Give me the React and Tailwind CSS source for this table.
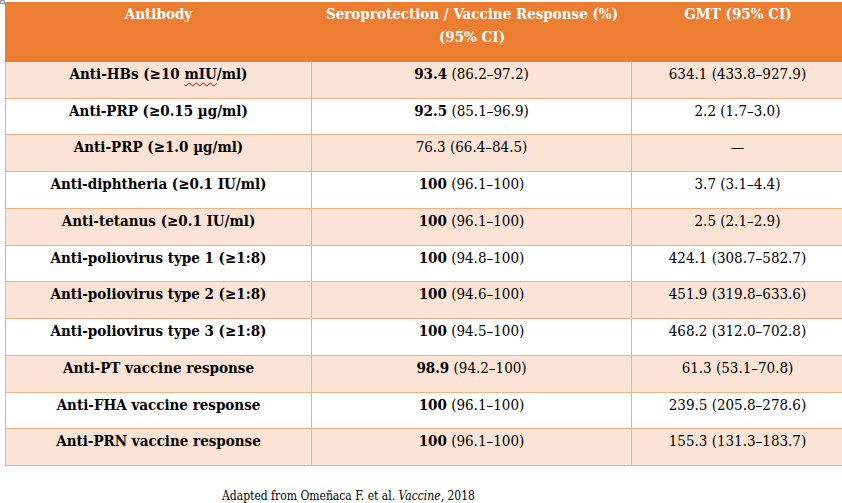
import React from 'react';

const rows = [
  { name: 'Anti-HBs (≥10 ', squiggle: 'mIU', tail: '/ml)', num: '93.4', bold: true, ci: '(86.2–97.2)', gmt: '634.1 (433.8–927.9)', h: 'h-[37px]' },
  { name: 'Anti-PRP (≥0.15 µg/ml)', num: '92.5', bold: true, ci: '(85.1–96.9)', gmt: '2.2 (1.7–3.0)', h: 'h-[36px]' },
  { name: 'Anti-PRP (≥1.0 µg/ml)', num: '76.3', bold: false, ci: '(66.4–84.5)', gmt: '—', h: 'h-[37px]' },
  { name: 'Anti-diphtheria (≥0.1 IU/ml)', num: '100', bold: true, ci: '(96.1–100)', gmt: '3.7 (3.1–4.4)', h: 'h-[37px]' },
  { name: 'Anti-tetanus (≥0.1 IU/ml)', num: '100', bold: true, ci: '(96.1–100)', gmt: '2.5 (2.1–2.9)', h: 'h-[37px]' },
  { name: 'Anti-poliovirus type 1 (≥1:8)', num: '100', bold: true, ci: '(94.8–100)', gmt: '424.1 (308.7–582.7)', h: 'h-[36px]' },
  { name: 'Anti-poliovirus type 2 (≥1:8)', num: '100', bold: true, ci: '(94.6–100)', gmt: '451.9 (319.8–633.6)', h: 'h-[37px]' },
  { name: 'Anti-poliovirus type 3 (≥1:8)', num: '100', bold: true, ci: '(94.5–100)', gmt: '468.2 (312.0–702.8)', h: 'h-[37px]' },
  { name: 'Anti-PT vaccine response', num: '98.9', bold: true, ci: '(94.2–100)', gmt: '61.3 (53.1–70.8)', h: 'h-[37px]' },
  { name: 'Anti-FHA vaccine response', num: '100', bold: true, ci: '(96.1–100)', gmt: '239.5 (205.8–278.6)', h: 'h-[36px]' },
  { name: 'Anti-PRN vaccine response', num: '100', bold: true, ci: '(96.1–100)', gmt: '155.3 (131.3–183.7)', h: 'h-[37px]' },
];

const squiggle = 'underline decoration-wavy decoration-[#e00000] decoration-1 underline-offset-[3px]';

export default function App() {
  return (
    <div className="relative w-[842px] h-[503px] overflow-hidden bg-white text-black font-['DejaVu_Serif_Condensed','DejaVu_Serif',serif]">
      {/* table move handle */}
      <div className="absolute left-0 top-0 w-[5px] h-[4px] bg-[#d6d6d6] border border-[#a0a0a0]"></div>

      <div className="pt-[2px] pl-[5px]">
        <div className="w-[839px] grid grid-cols-[307px_320px_212px] text-[15px] leading-[23px]">
          {/* header */}
          <div className="h-[60px] bg-[#ED7D31] text-white font-bold text-center pt-[1px]">Antibody</div>
          <div className="h-[60px] bg-[#ED7D31] text-white font-bold text-center pt-[1px]">
            Seroprotection / Vaccine Response (%)
            <br />
            (95% CI)
          </div>
          <div className="h-[60px] bg-[#ED7D31] text-white font-bold text-center pt-[1px]">GMT (95% CI)</div>

          {rows.map((r, i) => {
            const bg = i % 2 === 0 ? 'bg-[#FBE4D5]' : 'bg-white';
            return (
              <React.Fragment key={i}>
                <div className={`${r.h} ${bg} border-l border-r border-b border-[#F4B083] text-center font-bold pt-[1px]`}>
                  {r.squiggle ? (
                    <>
                      {r.name}
                      <span className={squiggle}>{r.squiggle}</span>
                      {r.tail}
                    </>
                  ) : (
                    r.name
                  )}
                </div>
                <div className={`${r.h} ${bg} border-r border-b border-[#F4B083] text-center pt-[1px]`}>
                  <span className={r.bold ? 'font-bold' : ''}>{r.num}</span> {r.ci}
                </div>
                <div className={`${r.h} ${bg} border-r border-b border-[#F4B083] text-center pt-[1px]`}>{r.gmt}</div>
              </React.Fragment>
            );
          })}
        </div>

        <p className="mt-[22px] pl-[217px] text-[12px] leading-[16px]">
          Adapted from <span className={squiggle}>Omeñaca</span> F. et al. <i>Vaccine</i>, 2018
        </p>
      </div>
    </div>
  );
}
